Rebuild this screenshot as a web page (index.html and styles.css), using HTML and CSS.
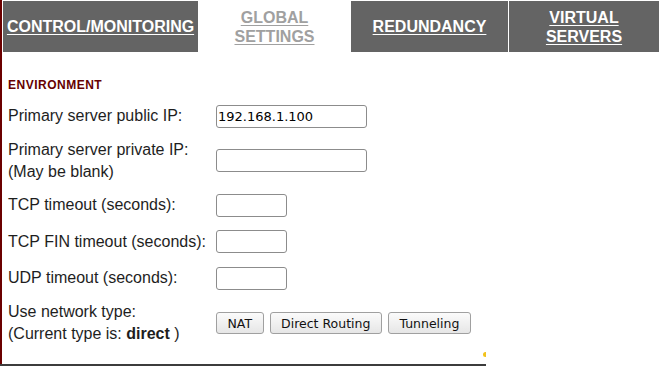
FILE: index.html
```html
<!DOCTYPE html>
<html lang="en">
<head>
    <meta charset="UTF-8">
    <meta name="viewport" content="width=device-width, initial-scale=1.0">
    <title>Global Settings</title>
    <link rel="stylesheet" href="styles.css">
</head>
<body>
    <div class="frame">
        <nav class="tabs">
            <a class="tab tab-control" href="#">CONTROL/MONITORING</a>
            <a class="tab tab-global tab-active" href="#">GLOBAL<br>SETTINGS</a>
            <a class="tab tab-redundancy" href="#">REDUNDANCY</a>
            <a class="tab tab-virtual" href="#">VIRTUAL<br>SERVERS</a>
        </nav>

        <section class="panel">
            <h2 class="section-title">ENVIRONMENT</h2>

            <div class="form">
                <div class="row row-1">
                    <label class="label" for="pub-ip">Primary server public IP:</label>
                    <input class="field field-wide" id="pub-ip" type="text" value="192.168.1.100">
                </div>
                <div class="row row-2">
                    <label class="label" for="priv-ip">Primary server private IP:<br>(May be blank)</label>
                    <input class="field field-wide" id="priv-ip" type="text">
                </div>
                <div class="row row-3">
                    <label class="label" for="tcp">TCP timeout (seconds):</label>
                    <input class="field field-short" id="tcp" type="text">
                </div>
                <div class="row row-4">
                    <label class="label" for="tcpfin">TCP FIN timeout (seconds):</label>
                    <input class="field field-short" id="tcpfin" type="text">
                </div>
                <div class="row row-5">
                    <label class="label" for="udp">UDP timeout (seconds):</label>
                    <input class="field field-short" id="udp" type="text">
                </div>
                <div class="row row-6">
                    <div class="label">Use network type:<br>(Current type is: <strong>direct</strong> )</div>
                    <div class="buttons">
                        <button class="btn" type="button">NAT</button>
                        <button class="btn" type="button">Direct Routing</button>
                        <button class="btn" type="button">Tunneling</button>
                    </div>
                </div>
            </div>

            <span class="grip"></span>
        </section>
    </div>
    <div class="rule"></div>
</body>
</html>
```

FILE: styles.css
```css
:root {
    --tab-bg: #646464;
    --frame-red: #6b0000;
    --title-red: #660000;
    --text: #1e1e1e;
}

body {
    margin: 0;
    font-family: "Liberation Sans", Arial, sans-serif;
    color: var(--text);
    background: #fff;
}

.frame {
    position: relative;
    border-left: 2px solid var(--frame-red);
    height: 364px;
    box-sizing: border-box;
    padding-top: 1px;
}

.tabs {
    display: flex;
    gap: 1px;
    margin-left: 1px;
    height: 51px;
}

.tab {
    display: flex;
    align-items: center;
    justify-content: center;
    text-align: center;
    background: var(--tab-bg);
    color: #fff;
    font-weight: bold;
    font-size: 16px;
    line-height: 19px;
    text-decoration: underline;
    text-decoration-thickness: 1px;
    text-underline-offset: 2px;
}

.tab-control { flex: 0 0 195px; }
.tab-global { flex: 0 0 151px; }
.tab-redundancy { flex: 0 0 157px; }
.tab-virtual { flex: 1 1 auto; }

.tab-active {
    background: #fff;
    color: #a0a0a0;
}

.panel {
    padding: 0 0 0 6px;
}

.section-title {
    margin: 26px 0 0;
    font-size: 12px;
    line-height: 14px;
    letter-spacing: 0.5px;
    font-weight: bold;
    color: var(--title-red);
}

.form {
    margin-top: 6px;
}

.row {
    display: flex;
    align-items: center;
}

.row-1 { height: 36px; }
.row-2 { height: 53px; }
.row-3 { height: 36px; }
.row-4 { height: 37px; }
.row-5 { height: 36px; }
.row-6 { height: 54px; }

.label {
    flex: 0 0 208px;
    font-size: 16px;
    line-height: 22px;
}

.label strong {
    font-weight: bold;
}

.field {
    box-sizing: border-box;
    height: 23px;
    margin: 0;
    padding: 0 1px;
    border: 1px solid #8c8c8c;
    border-radius: 3px;
    font-family: "DejaVu Sans", sans-serif;
    font-size: 13px;
    color: #000;
    background: #fff;
}

.field-wide { width: 151px; }
.field-short { width: 71px; }

.buttons {
    display: flex;
    gap: 6px;
}

.btn {
    box-sizing: border-box;
    height: 22px;
    padding: 0 10.5px;
    border: 1px solid #a0a0a0;
    border-radius: 3px;
    background: linear-gradient(#fbfbfb, #e6e6e6);
    font-family: "DejaVu Sans", sans-serif;
    font-size: 12.5px;
    color: #111;
}

.grip {
    position: absolute;
    left: 481px;
    top: 352px;
    width: 3px;
    height: 5px;
    background: #f2c21b;
    border-radius: 3px 0 0 3px;
}

.rule {
    width: 486px;
    height: 2px;
    background: #3c3c3c;
}
```
